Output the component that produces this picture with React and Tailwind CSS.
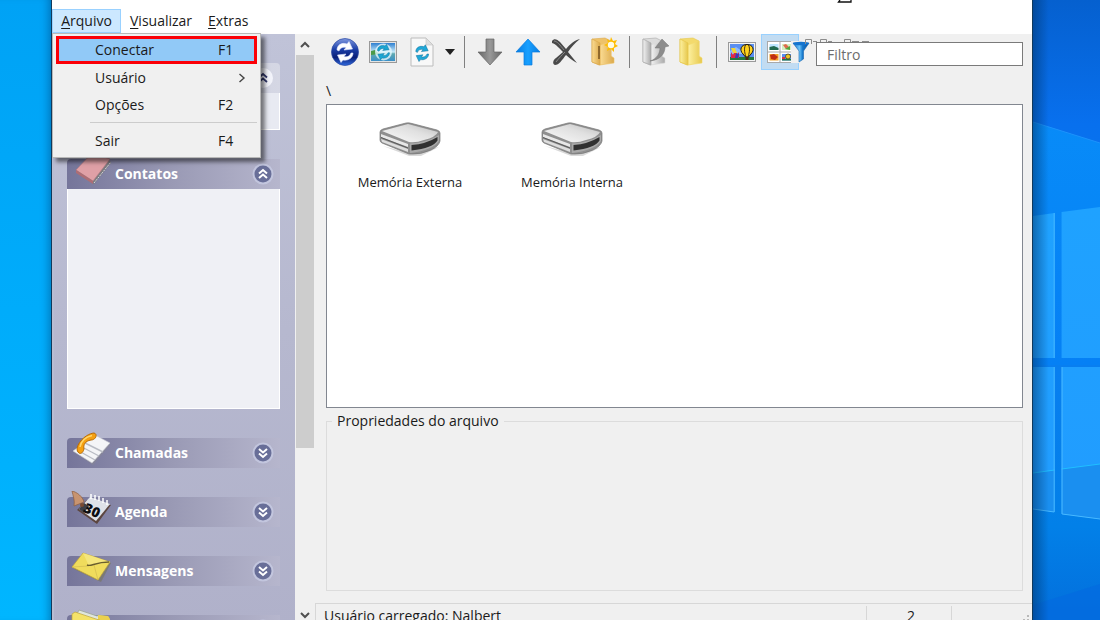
import React from "react";

const ToolButton = ({ label, size = "w-[38px]", active, children }) => (
  <button
    aria-label={label}
    className={
      "flex h-9 shrink-0 items-center justify-center " +
      size +
      (active ? " border border-[#99d1ff] bg-[#c2dcf2]" : "")
    }
  >
    {children}
  </button>
);

const Separator = () => <div className="mx-1.5 h-8 w-px shrink-0 bg-[#808080]" />;

const Arrows = ({ fill, stroke }) => (
  <g fill={fill} stroke={stroke} strokeWidth="0.6" strokeLinejoin="round">
    <path d="M6 12C6 7 11 4 16 6L18 3.500L21.500 11L13 12L15 9.500C12 8.500 9 10 8 13Z" />
    <path d="M22 15C22 20 17 23 12 22L10 24.500L6.500 17L15 16L13 18.500C16 19.500 19 18 20 15Z" />
  </g>
);

const SyncIcon = () => (
  <svg width="28" height="28" viewBox="0 0 28 28">
    <defs>
      <linearGradient id="ball" x1="0" y1="0" x2="0" y2="1">
        <stop offset="0" stopColor="#7f98e0" />
        <stop offset="0.4" stopColor="#1c3fa8" />
        <stop offset="0.7" stopColor="#0a1f78" />
        <stop offset="1" stopColor="#2f6be0" />
      </linearGradient>
    </defs>
    <circle cx="14" cy="14" r="13.500" fill="url(#ball)" stroke="#2846a0" strokeWidth="0.7" />
    <Arrows fill="#fff" stroke="#dfe6ff" />
  </svg>
);

const PhotoSyncIcon = () => (
  <svg width="28" height="22" viewBox="0 0 28 22">
    <defs>
      <linearGradient id="sky" x1="0" y1="0" x2="0" y2="1">
        <stop offset="0" stopColor="#2e7fd0" />
        <stop offset="0.5" stopColor="#c9ecfa" />
        <stop offset="0.6" stopColor="#5fa9b0" />
        <stop offset="1" stopColor="#3a90c8" />
      </linearGradient>
    </defs>
    <rect x="0.500" y="0.500" width="27" height="21" fill="#e4e4e4" stroke="#999" />
    <rect x="2" y="2" width="24" height="18" fill="url(#sky)" />
    <path d="M2 10L6 9L10 13L2 14Z" fill="#4b9a48" />
    <circle cx="14.500" cy="11" r="8.500" fill="#e4f7fc" fillOpacity="0.8" />
    <g transform="translate(4 0.500) scale(0.75)">
      <Arrows fill="#1ba5d2" stroke="#0b6f9a" />
    </g>
  </svg>
);

const PageSyncIcon = () => (
  <svg width="24" height="30" viewBox="0 0 24 30">
    <path d="M1 1H16L23 8V29H1Z" fill="#f8f8f8" stroke="#bcbcbc" />
    <path d="M16 1V8H23Z" fill="#dedede" stroke="#c4c4c4" strokeWidth="0.6" />
    <g transform="translate(1 5) scale(0.8)">
      <Arrows fill="#20a8d8" stroke="#0d6a94" />
    </g>
  </svg>
);

const ArrowIcon = ({ id, from, to, down }) => (
  <svg width="26" height="28" viewBox="0 0 26 28">
    <defs>
      <linearGradient id={id} x1="0" y1="0" x2="1" y2="0">
        <stop offset="0" stopColor={from} />
        <stop offset="0.5" stopColor={to} />
        <stop offset="1" stopColor={from} />
      </linearGradient>
    </defs>
    <path
      transform={down ? "rotate(180 13 14)" : undefined}
      d="M13 1L25 14H17V27H9V14H1Z"
      fill={"url(#" + id + ")"}
      stroke={from}
      strokeWidth="0.7"
    />
  </svg>
);

const DeleteIcon = () => (
  <svg width="30" height="28" viewBox="0 0 30 28">
    <path d="M1 3C3 0 6 1 9 4L15 11C19 6 24 2 29 1C24 5 20 9 17 14C20 18 23 21 26 25C21 22 18 20 15 17C11 22 8 27 4 27C1 26 2 22 5 20L12 14C8 10 5 6 1 5Z" fill="#4a4a4a" />
    <path d="M3 3C6 3 9 7 13 12M5 24C8 20 11 17 14 14" stroke="#888" fill="none" />
  </svg>
);

const FolderIcon = ({ id, light, dark, back, star, arrow }) => (
  <svg width="27" height="30" viewBox="0 0 27 30">
    <defs>
      <linearGradient id={id} x1="0" y1="0" x2="1" y2="0">
        <stop offset="0" stopColor={light} />
        <stop offset="1" stopColor={dark} />
      </linearGradient>
    </defs>
    <path d="M1 2L14 1L20 4V25L8 28L1 25Z" fill={back} stroke={dark} strokeWidth="0.6" />
    <path d="M9 8L20 4V19L23 21V26L9 28Z" fill={"url(#" + id + ")"} stroke={back} strokeWidth="0.6" />
    <path d="M1 2L9 6V28L1 25Z" fill={"url(#" + id + ")"} stroke={dark} strokeWidth="0.7" />
    {star && (
      <g>
        <path d="M8 9V22" stroke="#765220" strokeWidth="1.500" />
        <path d="M20 0L22 4L26 3L24 7L27 9L23 11L23 15L20 12L16 14L17 10L13 8L17 6L16 2L19 4Z" fill="#ffbd00" />
        <circle cx="20" cy="8" r="3.200" fill="#fffbe0" />
      </g>
    )}
    {arrow && (
      <path d="M8 24C15 22 18 16 18 11L13 11L20 2L27 9L23 10C23 17 18 23 8 24Z" fill="#8c8c8c" stroke="#777" strokeWidth="0.5" />
    )}
  </svg>
);

const BalloonPhoto = () => (
  <svg width="28" height="20" viewBox="0 0 28 20">
    <rect x="0.500" y="0.500" width="27" height="19" fill="#f4f4f4" stroke="#9a9a9a" />
    <rect x="2" y="2" width="24" height="16" fill="#5b8ff0" />
    <path d="M2 9L8 5L14 9L16 4H20V12H2Z" fill="#8dbcff" />
    <rect x="2" y="15" width="24" height="3" fill="#23783f" />
    <path d="M3 16V10L5 13L7 9L9 13L11 10V16H3Z" fill="#e02846" />
    <path d="M3 6H7L9 11H5Z" fill="#f2d536" />
    <path d="M8 11L11 12L10 16H7Z" fill="#3c3cb4" />
    <path d="M19 2.500C13 2.500 11 8 15 12L17.500 15H20.500L23 12C27 8 25 2.500 19 2.500Z" fill="#ffd21c" stroke="#221a10" />
    <path d="M17.500 3C15.500 7 17 12 18 15M20.500 3C22.500 7 21 12 20 15" fill="none" stroke="#2a1a10" strokeWidth="0.9" />
    <rect x="17.500" y="15" width="3" height="3" fill="#4c2a10" />
  </svg>
);

const Thumbnails = () => (
  <svg width="26" height="22" viewBox="0 0 26 22">
    <rect x="0.500" y="0.500" width="25" height="21" fill="#fff" stroke="#a9a9a9" />
    <path d="M13 1V21M1 11H25" stroke="#a9a9a9" />
    <rect x="2.500" y="3" width="9" height="6" fill="#bfe6ff" />
    <path d="M2.500 6L7 5L11.500 7V9H2.500Z" fill="#226a50" />
    <rect x="15" y="3" width="9" height="6" fill="#d7efc0" />
    <path d="M16 4L19 3L22 6L19 8Z" fill="#e06a4c" />
    <path d="M18 8L23 5V9Z" fill="#4fa53d" />
    <rect x="2.500" y="13" width="9" height="6.500" fill="#f2a12a" />
    <path d="M3 14L7 13L11 16L8 19L4 18Z" fill="#c02d14" />
    <rect x="15" y="13" width="9" height="6.500" fill="#5b8ff0" />
    <path d="M15 18H24V19.500H15Z" fill="#23783f" />
    <circle cx="21" cy="15.500" r="2.500" fill="#f0c420" stroke="#332" strokeWidth="0.7" />
    <rect x="15" y="16" width="3" height="2" fill="#d8324a" />
  </svg>
);

const Funnel = () => (
  <svg width="18" height="22" viewBox="0 0 18 22">
    <defs>
      <linearGradient id="fun" x1="0" y1="0" x2="1" y2="0">
        <stop offset="0" stopColor="#0a68c4" />
        <stop offset="0.4" stopColor="#6cc4fa" />
        <stop offset="0.6" stopColor="#1678cc" />
        <stop offset="1" stopColor="#0b4f9c" />
      </linearGradient>
    </defs>
    <path d="M1 2H17L11.500 10V18L7 21V10Z" fill="url(#fun)" stroke="#1563ad" strokeWidth="0.6" />
    <ellipse cx="9" cy="2.500" rx="8" ry="1.800" fill="#1474cf" />
  </svg>
);

const Drive = () => (
  <svg width="62" height="36" viewBox="0 0 62 36">
    <defs>
      <linearGradient id="top" x1="0" y1="1" x2="1" y2="0">
        <stop offset="0" stopColor="#fbfbfb" />
        <stop offset="0.6" stopColor="#e0e0e0" />
        <stop offset="1" stopColor="#bcbcbc" />
      </linearGradient>
    </defs>
    <path d="M4 24L30 34L42 34L60 25L30 31Z" fill="#000" opacity="0.15" />
    <path d="M1 10Q1 8 4 7L27 1Q30 0.500 33 1.500L58 8Q61 9 61 11V19Q60 24 52 28Q42 33 30 32L3 21Q1 20 1 18Z" fill="#8f8f8f" stroke="#777" strokeWidth="0.7" />
    <path d="M3 9L29 2L59 10Q57 15 45 18Q37 21 30 20Z" fill="url(#top)" />
    <path d="M2 12L29 22V25L2 15Z" fill="#e8e8e8" />
    <path d="M2 17L29 27V30L3 20Z" fill="#dedede" />
    <path d="M2 15.500L29 26" stroke="#555" strokeWidth="0.9" />
    <path d="M31 21.500Q47 21 60 13V19Q54 28 31 31Z" fill="#a9a9a9" />
    <path d="M32.500 23Q47 22 58.500 15V18.500Q54 26 32.500 28.500Z" fill="#303030" />
  </svg>
);

const DoubleChevron = ({ up }) => (
  <svg width="22" height="22" viewBox="0 0 22 22" className="shrink-0">
    <circle cx="11" cy="11" r="10.500" fill="#c8cce4" opacity="0.75" />
    <circle cx="11" cy="11" r="8.500" fill="#686e98" />
    <path
      d={up ? "M7 10.500L11 7L15 10.500M7 15L11 11.500L15 15" : "M7 7L11 10.500L15 7M7 11.500L11 15L15 11.500"}
      fill="none"
      stroke="#fff"
      strokeWidth="2"
    />
  </svg>
);

const BookArt = () => (
  <svg width="40" height="34" viewBox="0 0 40 34">
    <path d="M6 17L20 3L39 8L40 10L23 31L6 20Z" fill="#7a7a80" />
    <path d="M5 17L21 0L39 6L22 28Z" fill="#dfa0a6" stroke="#b87880" strokeWidth="0.6" />
    <path d="M5 17L22 28V31L5 20Z" fill="#ad6d75" />
    <path d="M23 30L40 9" stroke="#d6d6da" strokeDasharray="2 1" />
  </svg>
);

const PhoneArt = () => (
  <svg width="40" height="34" viewBox="0 0 40 34">
    <path d="M3 20L26 4L39 13L22 33Z" fill="#8a8a92" opacity="0.5" />
    <path d="M2 19L24 3L39 11L21 31Z" fill="#f4f5f7" stroke="#c4c6cc" strokeWidth="0.6" />
    <path d="M14 11L32 20M11 15L28 24M8 19L24 28" stroke="#b9bcc4" strokeWidth="1.400" />
    <path d="M7 20C3 15 13 2 23 1C27 2 25 8 20 8C14 9 12 13 13 17C12 21 9 23 7 20Z" fill="#f5a012" stroke="#b86c08" />
    <path d="M9 15C10 9 15 5 21 3.500" stroke="#ffd76b" strokeWidth="1.500" fill="none" />
  </svg>
);

const CalendarArt = () => (
  <svg width="40" height="34" viewBox="0 0 40 34">
    <path d="M6 19L16 9L40 14L26 33Z" fill="#5c4640" />
    <path d="M8 18L19 6L39 13L25 30Z" fill="#dfe2e8" />
    <path d="M8 18L13 12L18 15L13 22Z" fill="#3c3e46" />
    <path d="M20 3V8M24 4V9M28 5V10M32 7V12M36 9V14" stroke="#fff" strokeWidth="1.500" />
    <g transform="translate(14 15) rotate(25)">
      <text x="0" y="6" fontSize="14" fontWeight="800" fontFamily="Open Sans, sans-serif" fill="#0c0d10">30</text>
    </g>
    <path d="M1 0C6 1 12 6 13 11L3 15C4 9 2 5 1 0Z" fill="#c89470" stroke="#8c5c3c" strokeWidth="0.7" />
    <circle cx="11" cy="14" r="2" fill="#7a4a30" />
  </svg>
);

const EnvelopeArt = () => (
  <svg width="40" height="34" viewBox="0 0 40 34">
    <path d="M3 19L14 5L40 13L30 32Z" fill="#77745c" opacity="0.6" />
    <path d="M1 17L12 3L39 12L27 30Z" fill="#f0dc5c" stroke="#bfa53a" strokeWidth="0.7" />
    <path d="M12 3L18 16L39 12Z" fill="#f5e67c" />
    <path d="M18 16L1 17M23 15L27 30" fill="none" stroke="#d2bc50" strokeWidth="0.7" />
    <path d="M16 15C20 17 24 12 38 12" fill="none" stroke="#6a5e2c" strokeWidth="1.400" />
  </svg>
);

const FoldersArt = () => (
  <svg width="40" height="34" viewBox="0 0 40 34">
    <path d="M6 5L8 1L26 7L28 6L38 8V34H6Z" fill="#dfe6dc" stroke="#96a090" strokeWidth="0.7" />
    <path d="M27 6L37 7L39 10V34H27Z" fill="#ead04e" />
    <path d="M1 5L4 3L34 13L36 34H1Z" fill="#f4e268" stroke="#bda53c" strokeWidth="0.7" />
  </svg>
);

const sections = [
  { title: "Contatos", art: <BookArt />, up: true, body: true },
  { title: "Chamadas", art: <PhoneArt /> },
  { title: "Agenda", art: <CalendarArt /> },
  { title: "Mensagens", art: <EnvelopeArt /> },
  { title: "", label: "Arquivos", art: <FoldersArt /> },
];

const Sidebar = () => (
  <aside className="flex w-[243px] shrink-0 flex-col gap-[29px] overflow-hidden border-l-2 border-[#b9bdd2] bg-linear-to-b from-[#c0c3d8] via-[#b6b8cf] to-[#b0b1ca] pt-[29px] pr-[15px] pl-[13px]">
    <section>
      <button aria-label="Recolher" className="flex h-[30px] w-full items-center justify-end rounded-t bg-linear-to-r from-[#c0c3d8] to-[#d5d7e4] pr-1.5">
        <svg width="22" height="22" viewBox="0 0 22 22">
          <circle cx="11" cy="11" r="10" fill="#f2f3fa" />
          <path d="M7 10.500L11 7L15 10.500M7 15L11 11.500L15 15" fill="none" stroke="#32386c" strokeWidth="1.800" />
        </svg>
      </button>
      <div className="h-[37px] border border-t-0 border-white bg-[#e8eaf2]" />
    </section>
    {sections.map((s) => (
      <section key={s.label || s.title}>
        <button
          aria-label={s.title || s.label}
          className="flex h-[30px] w-full items-center rounded-tl bg-linear-to-r from-[#75759a] via-[#9a9ab5] to-[#b6b6cd] pr-1.5 pl-1 text-left"
        >
          <span className="-mt-2 shrink-0">{s.art}</span>
          <span className="ml-1 flex-1 text-sm font-bold text-white">{s.title}</span>
          <DoubleChevron up={s.up} />
        </button>
        {s.body && <div className="h-[220px] border border-t-0 border-white bg-[#eff0f5]" />}
      </section>
    ))}
  </aside>
);

const menuItems = [
  { label: "Conectar", key: "F1", active: true },
  { label: "Usuário", sub: true },
  { label: "Opções", key: "F2" },
  { label: "Sair", key: "F4", divided: true },
];

const FileMenu = () => (
  <div role="menu" className="absolute top-full left-0 z-10 w-[209px] border border-[#b8b8b8] bg-[#f0f0f0] p-[3px] pt-0.5 shadow-[4px_4px_4px_rgba(0,0,0,0.5)]">
    {menuItems.map((m) => (
      <div key={m.label}>
        {m.divided && <div className="mt-1 mb-1 ml-[34px] h-px bg-[#cccccc]" />}
        <button
          role="menuitem"
          className={
            "flex w-full items-center text-left " +
            (m.active
              ? "h-7 border-[3px] border-[#fb0007] bg-[#91c9f7] pr-[18px] pl-9"
              : "h-[27px] pr-[21px] pl-[39px]")
          }
        >
          <span className="flex-1">{m.label}</span>
          {m.key && <span className="w-[18px]">{m.key}</span>}
          {m.sub && (
            <svg width="8" height="10" viewBox="0 0 8 10" className="-mr-2.5">
              <path d="M1.500 1L6 5L1.500 9" fill="none" stroke="#444" strokeWidth="1.400" />
            </svg>
          )}
        </button>
      </div>
    ))}
  </div>
);

const MenuBar = () => (
  <nav className="relative flex h-[34px] shrink-0 items-end bg-white pb-px">
    <div className="relative">
      <button className="flex h-6 w-[69px] items-center justify-center border border-[#99d1ff] bg-[#cce8ff]">
        <span><u className="underline-offset-2">A</u>rquivo</span>
      </button>
      <FileMenu />
    </div>
    <button className="ml-[9px] h-6"><u className="underline-offset-2">V</u>isualizar</button>
    <button className="ml-4 h-6"><u className="underline-offset-2">E</u>xtras</button>
    <svg width="16" height="3" viewBox="0 0 16 3" className="absolute top-0 left-[785px]">
      <path d="M3 0L1.500 2H14V0" fill="none" stroke="#111" strokeWidth="1.300" />
    </svg>
  </nav>
);

const Scrollbar = () => (
  <div className="flex w-5 shrink-0 flex-col bg-[#f0f0f0]">
    <div className="flex h-[21px] items-center justify-center">
      <svg width="10" height="7" viewBox="0 0 10 7"><path d="M1 6L5 2L9 6" fill="none" stroke="#505050" strokeWidth="2" /></svg>
    </div>
    <div className="flex-1">
      <div className="mr-px ml-px h-5/7 bg-[#cdcdcd]" />
    </div>
    <div className="flex h-[21px] items-center justify-center">
      <svg width="10" height="7" viewBox="0 0 10 7"><path d="M1 1L5 5L9 1" fill="none" stroke="#505050" strokeWidth="2" /></svg>
    </div>
  </div>
);

const Toolbar = () => (
  <div className="flex h-9 shrink-0 items-center">
    <ToolButton label="Sincronizar"><SyncIcon /></ToolButton>
    <ToolButton label="Atualizar imagens"><PhotoSyncIcon /></ToolButton>
    <ToolButton label="Atualizar arquivos" size="w-10"><PageSyncIcon /></ToolButton>
    <button aria-label="Mais opções" className="flex h-9 w-4 shrink-0 items-center justify-center">
      <svg width="10" height="6" viewBox="0 0 10 6"><path d="M0 0H10L5 6Z" fill="#222" /></svg>
    </button>
    <Separator />
    <ToolButton label="Baixar"><ArrowIcon id="dn" from="#666" to="#999" down /></ToolButton>
    <ToolButton label="Enviar"><ArrowIcon id="upw" from="#087be0" to="#18a0ff" /></ToolButton>
    <ToolButton label="Excluir"><DeleteIcon /></ToolButton>
    <ToolButton label="Nova pasta"><FolderIcon id="f1" light="#fbdc93" dark="#dba94c" back="#eec269" star /></ToolButton>
    <Separator />
    <ToolButton label="Abrir"><FolderIcon id="f2" light="#f3f3f3" dark="#a9a9a9" back="#dcdcdc" arrow /></ToolButton>
    <ToolButton label="Pasta" size="w-9"><FolderIcon id="f3" light="#fdf1a0" dark="#e6c74c" back="#f3da6c" /></ToolButton>
    <Separator />
    <ToolButton label="Imagem"><BalloonPhoto /></ToolButton>
    <ToolButton label="Miniaturas" active><Thumbnails /></ToolButton>
    <label htmlFor="filter" aria-label="Filtro" className="z-0 -ml-2 flex h-[22px] w-[25px] shrink-0 items-center bg-[#f0f0f0] pl-px">
      <Funnel />
    </label>
    <div className="relative min-w-0 flex-1 pt-1">
      <svg width="68" height="6" viewBox="0 0 68 6" className="absolute top-0 -left-3">
        <path d="M1.500 6V1.500H7.500V6M9 3.500H13M16.500 6V1.500H22.500V6M24 3.500H28M40.500 6V1.500H46.500V6M48 3.500H55M58 3.500H65" fill="none" stroke="#8c8c8c" />
      </svg>
      <input id="filter" placeholder="Filtro" className="relative block h-6 w-full border border-[#7a7a7a] bg-white px-2.5 placeholder:text-[#6d6d6d]" />
    </div>
  </div>
);

const Main = () => (
  <main className="flex min-w-0 flex-1 flex-col bg-[#f0f0f0]">
    <div className="flex flex-1 flex-col px-[11px] pr-[9px]">
      <Toolbar />
      <div className="flex h-[34px] items-center pt-2">\</div>
      <div className="flex h-[304px] border border-[#828790] bg-white pt-[17px] pl-0.5">
        {["Memória Externa", "Memória Interna"].map((name) => (
          <button key={name} className="flex w-[162px] flex-col items-center self-start text-[13px] leading-5">
            <Drive />
            <span className="mt-3.5">{name}</span>
          </button>
        ))}
      </div>
      <fieldset className="mt-[3px] mb-3 flex-1 border border-[#dcdcdc] pl-[5px]">
        <legend className="px-[5px] leading-5">Propriedades do arquivo</legend>
      </fieldset>
    </div>
    <footer className="flex h-[23px] shrink-0 border-t border-l border-[#d7d7d7] leading-5">
      <div className="flex-1 pt-0.5 pl-2">Usuário carregado: Nalbert</div>
      <div className="mt-0.5 w-[85px] border-l border-[#d7d7d7] pl-10">2</div>
      <div className="mt-0.5 flex w-[81px] justify-end border-l border-[#d7d7d7] pt-[9px] pr-0.5">
        <svg width="11" height="11" viewBox="0 0 11 11">
          <path d="M8 0h2v2h-2zM8 4h2v2h-2zM4 4h2v2h-2zM8 8h2v2h-2zM4 8h2v2h-2zM0 8h2v2h-2z" fill="#b8b8b8" />
        </svg>
      </div>
    </footer>
  </main>
);

const Wallpaper = () => (
  <svg className="h-full w-[67px] shrink-0" viewBox="0 0 68 620" preserveAspectRatio="none" aria-hidden="true">
    <defs>
      <linearGradient id="wall" x1="0" y1="0" x2="0" y2="1">
        <stop offset="0" stopColor="#0560cf" />
        <stop offset="0.2" stopColor="#0870ee" />
        <stop offset="0.6" stopColor="#087ff0" />
        <stop offset="0.85" stopColor="#0280e8" />
        <stop offset="1" stopColor="#036fdc" />
      </linearGradient>
      <linearGradient id="beam" x1="0" y1="0" x2="0" y2="1">
        <stop offset="0" stopColor="#088bf8" />
        <stop offset="1" stopColor="#0580f5" />
      </linearGradient>
      <linearGradient id="pane" x1="0" y1="0" x2="0" y2="1">
        <stop offset="0" stopColor="#1fa2ff" />
        <stop offset="1" stopColor="#219cff" />
      </linearGradient>
      <linearGradient id="edge" x1="0" y1="0" x2="1" y2="0">
        <stop offset="0" stopColor="#003366" stopOpacity="0.5" />
        <stop offset="1" stopColor="#003366" stopOpacity="0" />
      </linearGradient>
    </defs>
    <rect width="68" height="620" fill="url(#wall)" />
    <path d="M0 122L68 143V365H0Z" fill="url(#beam)" />
    <path d="M0 122L68 143" stroke="#1c92fb" />
    <path d="M0 216L22 213V358H0Z M29 212L68 207V358H29Z M0 367H22V512L0 509Z M29 367H68V519L29 514Z" fill="url(#pane)" />
    <path d="M0 473L22 470V512L0 509Z M29 469L68 464V519L29 514Z" fill="#1a8ff0" />
    <path d="M0 473L22 470M29 469L68 464" stroke="#20c0ff" />
    <path d="M21.500 213V358M21.500 367V512L0 509M29.500 367V514L68 519" fill="none" stroke="#48b8ff" />
    <path d="M0 605L68 584V620H0Z" fill="#046be0" opacity="0.7" />
    <rect width="16" height="620" fill="url(#edge)" />
  </svg>
);

export default function App() {
  return (
    <div className="flex h-screen overflow-hidden bg-[#00a2f0] font-['Open_Sans','Noto_Sans',sans-serif] text-sm leading-5 text-[#1a1a1a]">
      <div className="w-[51px] shrink-0 bg-linear-to-b from-[#00a2f5] via-[#00acfb] to-[#00b6ff] shadow-[inset_-8px_0_8px_-6px_rgba(0,40,90,0.4)]" />
      <div className="flex h-[calc(100vh+6px)] min-w-0 flex-1 flex-col border-x border-[#123a5c]">
        <MenuBar />
        <div className="flex min-h-0 flex-1">
          <Sidebar />
          <Scrollbar />
          <Main />
        </div>
      </div>
      <Wallpaper />
    </div>
  );
}
